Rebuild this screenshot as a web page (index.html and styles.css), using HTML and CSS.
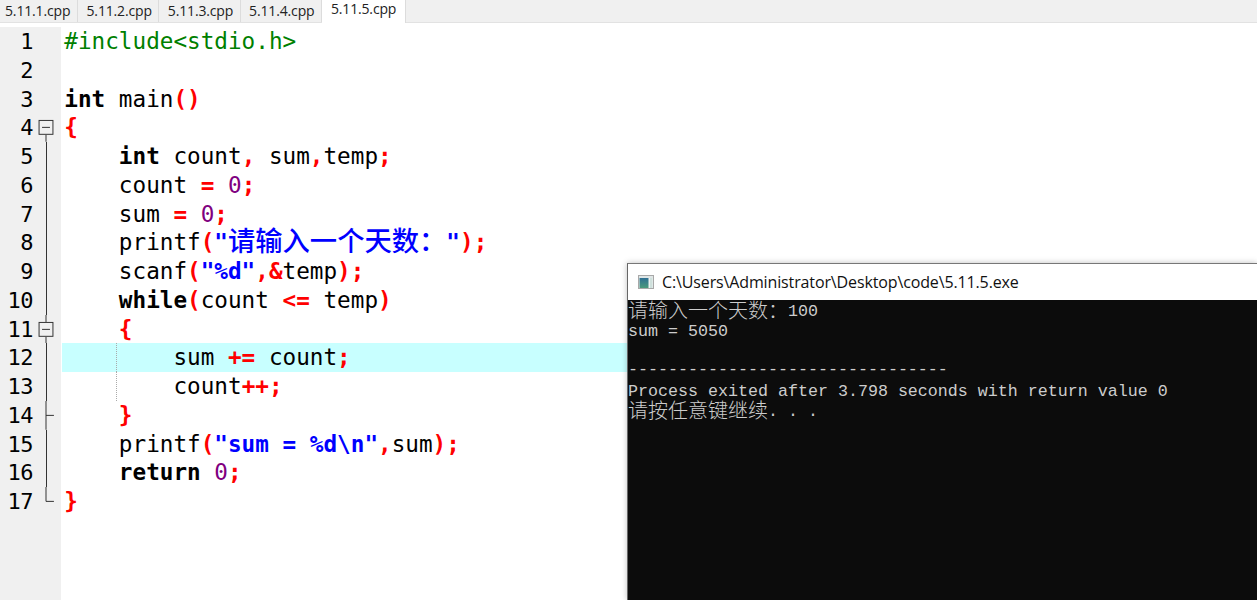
FILE: index.html
```html
<!DOCTYPE html>
<html lang="zh">
<head>
<meta charset="utf-8">
<title>5.11.5.cpp</title>
<link rel="stylesheet" href="styles.css">
</head>
<body>
<nav class="tabs">
  <div class="tab first">5.11.1.cpp</div>
  <div class="tab">5.11.2.cpp</div>
  <div class="tab">5.11.3.cpp</div>
  <div class="tab">5.11.4.cpp</div>
  <div class="tab active">5.11.5.cpp</div>
</nav>
<main class="editor">
  <div class="gutter">
    <div class="gl"><span class="num">1</span><span class="fold"></span></div>
    <div class="gl"><span class="num">2</span><span class="fold"></span></div>
    <div class="gl"><span class="num">3</span><span class="fold"></span></div>
    <div class="gl"><span class="num">4</span><span class="fold"><svg class="fsvg" viewBox="0 0 16 29"><path class="st" d="M8 22V29"/><rect class="st" x="1" y="7.5" width="14" height="14"/><path class="st" d="M4 14.5H12"/></svg></span></div>
    <div class="gl"><span class="num">5</span><span class="fold line"></span></div>
    <div class="gl"><span class="num">6</span><span class="fold line"></span></div>
    <div class="gl"><span class="num">7</span><span class="fold line"></span></div>
    <div class="gl"><span class="num">8</span><span class="fold line"></span></div>
    <div class="gl"><span class="num">9</span><span class="fold line"></span></div>
    <div class="gl"><span class="num">10</span><span class="fold line"></span></div>
    <div class="gl"><span class="num">11</span><span class="fold"><svg class="fsvg" viewBox="0 0 16 29"><path class="st" d="M8 0V7M8 22V29"/><rect class="st" x="1" y="7.5" width="14" height="14"/><path class="st" d="M4 14.5H12"/></svg></span></div>
    <div class="gl"><span class="num">12</span><span class="fold line"></span></div>
    <div class="gl"><span class="num">13</span><span class="fold line"></span></div>
    <div class="gl"><span class="num">14</span><span class="fold"><svg class="fsvg" viewBox="0 0 16 29"><path class="st" d="M8 0V29M8 14.5H16"/></svg></span></div>
    <div class="gl"><span class="num">15</span><span class="fold line"></span></div>
    <div class="gl"><span class="num">16</span><span class="fold line"></span></div>
    <div class="gl"><span class="num">17</span><span class="fold"><svg class="fsvg" viewBox="0 0 16 29"><path class="st" d="M8 0V14.5H16"/></svg></span></div>
  </div>
  <div class="code">
    <div class="cl"><span class="pp">#include&lt;stdio.h&gt;</span></div>
    <div class="cl"></div>
    <div class="cl"><b>int</b> main<i>()</i></div>
    <div class="cl"><i>{</i></div>
    <div class="cl">    <b>int</b> count<i>,</i> sum<i>,</i>temp<i>;</i></div>
    <div class="cl">    count <i>=</i> <span class="n">0</span><i>;</i></div>
    <div class="cl">    sum <i>=</i> <span class="n">0</span><i>;</i></div>
    <div class="cl">    printf<i>(</i><span class="s">"<span class="zh">请输入一个天数：</span>"</span><i>);</i></div>
    <div class="cl">    scanf<i>(</i><span class="s">"%d"</span><i>,&amp;</i>temp<i>);</i></div>
    <div class="cl">    <b>while</b><i>(</i>count <i>&lt;=</i> temp<i>)</i></div>
    <div class="cl">    <i>{</i></div>
    <div class="cl hl"><span class="guide"></span>        sum <i>+=</i> count<i>;</i></div>
    <div class="cl"><span class="guide"></span>        count<i>++;</i></div>
    <div class="cl">    <i>}</i></div>
    <div class="cl">    printf<i>(</i><span class="s">"sum = %d\n"</span><i>,</i>sum<i>);</i></div>
    <div class="cl">    <b>return</b> <span class="n">0</span><i>;</i></div>
    <div class="cl"><i>}</i></div>
  </div>
</main>
<section class="console">
  <header class="titlebar">
    <svg class="appicon" viewBox="0 0 16 14"><defs><linearGradient id="ic" x1="0" y1="0" x2="0" y2="1"><stop offset="0" stop-color="#2f6f92"/><stop offset="1" stop-color="#4b9a7c"/></linearGradient></defs><rect x="0.5" y="0.5" width="15" height="13" fill="#eef2f2" stroke="#a8a8a8"/><rect x="1" y="1" width="14" height="2" fill="#dfe6e6"/><rect x="1.5" y="3" width="9" height="10" fill="url(#ic)"/><rect x="12" y="3" width="2.5" height="10" fill="#cfe0dc"/></svg>
    <span class="titletext">C:\Users\Administrator\Desktop\code\5.11.5.exe</span>
  </header>
  <div class="term">
    <div class="tl"><span class="tz">请输入一个天数：</span>100</div>
    <div class="tl">sum = 5050</div>
    <div class="tl"></div>
    <div class="tl dash">--------------------------------</div>
    <div class="tl">Process exited after 3.798 seconds with return value 0</div>
    <div class="tl"><span class="tz">请按任意键继续</span>. . .</div>
  </div>
</section>
</body>
</html>
```
FILE: styles.css
```css
html, body {
  margin: 0;
  height: 600px;
  overflow: hidden;
  background: #fff;
}
body { position: relative; }

.tabs {
  display: flex;
  height: 22px;
  background: #f0f0f0;
  border-bottom: 1px solid #e2e2e2;
  font: 14px/22px "Open Sans", "Noto Sans", sans-serif;
  color: #222;
}
.tab {
  width: 81.3px;
  box-sizing: border-box;
  padding-left: 8.5px;
  border-right: 1px solid #dcdcdc;
  white-space: nowrap;
  letter-spacing: -0.15px;
}
.tab.first {
  width: 78px;
  padding-left: 5px;
}
.tab.active {
  width: 84px;
  background: #fff;
  padding-left: 9px;
  line-height: 17px;
  height: 23px;
}

.editor {
  display: flex;
  padding-top: 4px;
}
.gutter {
  width: 61px;
  flex: none;
  background: #f0f0f0;
  height: 573px;
}
.gl {
  display: flex;
  height: 28.75px;
}
.num {
  width: 33px;
  text-align: right;
  font: 22px/30px "DejaVu Sans Mono", monospace;
  color: #000;
  letter-spacing: -0.5px;
}
.fold {
  width: 16px;
  margin-left: 5px;
  display: block;
  position: relative;
}
.fold.line::before {
  content: "";
  display: block;
  width: 1px;
  height: 100%;
  margin-left: 7.5px;
  background: #333;
}
.fsvg { display: block; width: 16px; height: 28.75px; }
.st { stroke: #333; stroke-width: 1; fill: none; }
rect.st { fill: #f0f0f0; }

.code {
  flex: 1;
  margin-left: 1px;
  font: 22.67px/29px "DejaVu Sans Mono", monospace;
  color: #000;
}
.cl {
  position: relative;
  height: 28.75px;
  padding-left: 2.3px;
  white-space: pre;
}
.cl b { font-weight: 700; color: #000; }
.cl i { font-style: normal; font-weight: 700; color: #f00; }
.pp { color: #008000; }
.n { color: #800080; }
.s { color: #00f; font-weight: 700; }
.zh {
  font: 500 27.3px/0 "Noto Sans CJK SC", sans-serif;
  vertical-align: -1px;
}
.hl { background: #c8ffff; }
.guide {
  position: absolute;
  left: 54px;
  top: 0;
  bottom: 0;
  border-left: 1px dotted #aaa;
}

.console {
  position: absolute;
  left: 627px;
  top: 263px;
  right: 0;
  bottom: 0;
  border-left: 1px solid #666;
  border-top: 1px solid #777;
  box-shadow: 0 0 6px rgba(0, 0, 0, 0.25);
  display: flex;
  flex-direction: column;
}
.titlebar {
  height: 36px;
  flex: none;
  background: #fff;
  display: flex;
  align-items: center;
  gap: 8px;
  padding-left: 10px;
}
.appicon { width: 16px; height: 14px; flex: none; }
.titletext {
  font: 16px "Open Sans", "Noto Sans", sans-serif;
  color: #111;
  letter-spacing: -0.13px;
  white-space: nowrap;
}
.term {
  flex: 1;
  background: #0c0c0c;
  color: #ccc;
  padding-top: 2px;
  font: 16.67px/20px "Liberation Mono", monospace;
}
.tl {
  height: 20px;
  white-space: pre;
}
.tl.dash {
  margin-top: -2px;
  height: 22px;
}
.tz {
  font: 300 20px/0 "Noto Sans CJK SC", sans-serif;
  vertical-align: -2px;
}
```
